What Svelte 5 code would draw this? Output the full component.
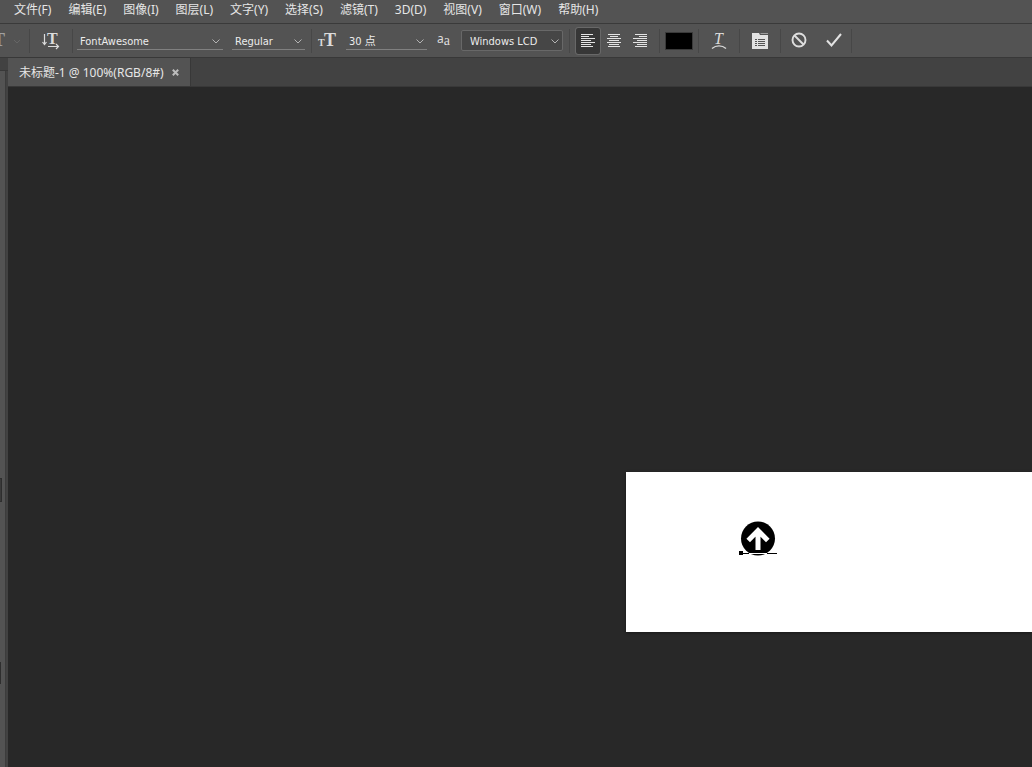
<script lang="ts">
	const menus = [
		'文件(F)',
		'编辑(E)',
		'图像(I)',
		'图层(L)',
		'文字(Y)',
		'选择(S)',
		'滤镜(T)',
		'3D(D)',
		'视图(V)',
		'窗口(W)',
		'帮助(H)'
	];

	const aligns = [
		{ id: 'left', label: '左对齐文本' },
		{ id: 'center', label: '居中对齐文本' },
		{ id: 'right', label: '右对齐文本' }
	];

	// line lengths of the paragraph glyph, top to bottom
	const lines = [12, 8, 14, 10, 14, 10, 12];

	let align = $state('left');
	let family = $state('FontAwesome');
	let weight = $state('Regular');
	let size = $state('30 点');
	let smoothing = $state('Windows LCD');

	function lineStart(id: string, length: number): number {
		if (id === 'left') return 0;
		return id === 'right' ? 14 - length : (14 - length) / 2;
	}
</script>

{#snippet chevron()}
	<svg class="chevron" width="8" height="5" viewBox="0 0 8 5" aria-hidden="true">
		<path d="M.5 .5 4 4 7.500 .5" fill="none" stroke="#b4b4b4" />
	</svg>
{/snippet}

<div class="app">
	<nav class="menu">
		{#each menus as item}
			<button type="button">{item}</button>
		{/each}
	</nav>

	<div class="options">
		<button type="button" class="tool" aria-label="文字工具">
			<svg width="24" height="18" viewBox="0 0 24 18">
				<text class="serif dim" x="-7" y="14" font-size="18">T</text>
				<path d="M14 8l3 3 3-3" fill="none" stroke="#656565" />
			</svg>
		</button>
		<span class="sep"></span>
		<button type="button" class="orient" aria-label="切换文本取向">
			<svg width="18" height="18" viewBox="0 0 18 18">
				<text class="serif" x="5" y="12" font-size="16">T</text>
				<path d="M2.500 2v10M.5 10l2 2.500 2-2.500M6 14.500h10M14 12l2.500 2.500L14 17" fill="none" stroke="#dcdcdc" stroke-width="1.200" />
			</svg>
		</button>
		<span class="sep"></span>
		<div class="fonts">
			<label class="field family">
				<select bind:value={family} aria-label="字体">
					<option>FontAwesome</option>
				</select>
				{@render chevron()}
			</label>
			<label class="field weight">
				<select bind:value={weight} aria-label="字体样式">
					<option>Regular</option>
				</select>
				{@render chevron()}
			</label>
		</div>
		<span class="sep"></span>
		<div class="sizes">
			<svg width="18" height="16" viewBox="0 0 18 16" aria-hidden="true">
				<text class="serif" x="0" y="13" font-size="10">T</text>
				<text class="serif" x="6" y="13" font-size="18">T</text>
			</svg>
			<label class="field size">
				<select bind:value={size} aria-label="字体大小">
					<option>30 点</option>
				</select>
				{@render chevron()}
			</label>
			<span class="smooth" aria-hidden="true"><sup>a</sup><sub>a</sub></span>
			<label class="field boxed">
				<select bind:value={smoothing} aria-label="消除锯齿">
					<option>Windows LCD</option>
				</select>
				{@render chevron()}
			</label>
		</div>
		<span class="sep"></span>
		<div class="aligns">
			{#each aligns as item}
				<button
					type="button"
					class:active={align === item.id}
					aria-label={item.label}
					aria-pressed={align === item.id}
					onclick={() => (align = item.id)}
				>
					<svg width="14" height="14" viewBox="0 0 14 14" shape-rendering="crispEdges">
						{#each lines as length, i}
							<rect x={lineStart(item.id, length)} y={i * 2} width={length} height="1" fill="#e4e4e4" />
						{/each}
					</svg>
				</button>
			{/each}
		</div>
		<span class="sep"></span>
		<button type="button" class="swatch" aria-label="文本颜色"></button>
		<span class="sep"></span>
		<button type="button" class="command" aria-label="创建文字变形">
			<svg width="16" height="18" viewBox="0 0 16 18">
				<text class="serif slanted" x="3" y="12" font-size="16">T</text>
				<path d="M1 16.500c4-3.500 10-3.500 14 0" fill="none" stroke="#d8d8d8" stroke-width="1.400" />
			</svg>
		</button>
		<span class="sep"></span>
		<button type="button" class="command" aria-label="切换字符和段落面板">
			<svg width="16" height="16" viewBox="0 0 16 16">
				<path d="M0 0h7l1 2h8v14H0z" fill="#e2e2e2" />
				<path d="M8 0h8v1H9z" fill="#9c9c9c" />
				<path d="M3 6.500h2M6 6.500h7M3 8.500h2M6 8.500h7M3 10.500h2M6 10.500h7M3 12.500h2M6 12.500h7" stroke="#555" />
			</svg>
		</button>
		<span class="sep"></span>
		<button type="button" class="finish" aria-label="取消所有当前编辑">
			<svg width="16" height="18" viewBox="0 0 16 18">
				<circle cx="8" cy="8" r="6.500" fill="none" stroke="#dedede" stroke-width="1.900" />
				<path d="M3.500 3.500l9 9" stroke="#dedede" stroke-width="1.900" />
			</svg>
		</button>
		<button type="button" class="finish" aria-label="提交所有当前编辑">
			<svg width="16" height="16" viewBox="0 0 16 16">
				<path d="M1 7.500l4.500 5L15 1" fill="none" stroke="#e2e2e2" stroke-width="2" />
			</svg>
		</button>
		<span class="sep"></span>
	</div>

	<div class="workspace">
		<aside class="toolbox">
			<div class="grip"></div>
			<div class="strip">
				<span class="slot"></span>
				<span class="slot second"></span>
			</div>
		</aside>
		<main class="editor">
			<div class="tabs">
				<div class="tab">
					<span>未标题-1 @ 100%(RGB/8#)</span>
					<button type="button" aria-label="关闭">
						<svg width="7" height="7" viewBox="0 0 7 7">
							<path d="M.8 .8l5.400 5.400M6.200 .8.8 6.200" stroke="#bcbcbc" stroke-width="2" />
						</svg>
					</button>
				</div>
			</div>
			<div class="canvas">
				<div class="artboard">
					<svg class="layer" width="38" height="36" viewBox="0 0 38 36" role="img" aria-label="向上箭头">
						<circle cx="19" cy="17.500" r="17" fill="#000" />
						<path d="M19 9.300V29M9.200 19.500 19 9.500l9.800 10" fill="none" stroke="#fff" stroke-width="5" stroke-linejoin="miter" />
						<path d="M10 32.500h18" stroke="#fff" />
						<path d="M3 32.500h7M28 32.500h10" stroke="#000" />
						<path d="M0 30h4v4H0z" fill="#000" />
					</svg>
				</div>
			</div>
		</main>
	</div>
</div>

<style>
	:global(body) {
		margin: 0;
		background: #282828;
	}

	.app {
		display: flex;
		flex-direction: column;
		height: 100vh;
		overflow: hidden;
		background: #535353;
		color: #e6e6e6;
		font-family: 'Noto Sans', 'Noto Sans CJK SC', sans-serif;
		font-size: 12px;
	}

	button {
		display: flex;
		align-items: center;
		justify-content: center;
		flex: none;
		border: 0;
		padding: 0;
		background: none;
		color: inherit;
		font: inherit;
	}

	svg {
		overflow: visible;
	}

	.menu {
		display: flex;
		gap: 17px;
		flex: none;
		box-sizing: border-box;
		height: 24px;
		padding: 0 14px 4px;
		border-bottom: 1px solid #3a3a3a;
	}

	.menu button {
		line-height: 18px;
		white-space: nowrap;
	}

	.options {
		display: flex;
		align-items: center;
		flex: none;
		box-sizing: border-box;
		height: 34px;
		border-bottom: 1px solid #383838;
	}

	.sep {
		flex: none;
		width: 1px;
		height: 24px;
		background: #474747;
	}

	.serif {
		fill: #dcdcdc;
		font-family: 'Liberation Serif', serif;
		font-weight: bold;
	}

	.dim {
		fill: #a0a0a0;
	}

	.slanted {
		font-style: italic;
		font-weight: normal;
	}

	.tool {
		width: 29px;
		justify-content: flex-start;
	}

	.orient {
		width: 42px;
	}

	.fonts {
		display: flex;
		gap: 9px;
		padding: 0 6px 0 4px;
	}

	.sizes {
		display: flex;
		align-items: center;
		gap: 10px;
		padding: 0 6px;
	}

	.smooth {
		display: flex;
		width: 14px;
		color: #dcdcdc;
		line-height: 14px;
	}

	.smooth sup,
	.smooth sub {
		font-size: 12px;
		vertical-align: baseline;
	}

	.smooth sup {
		padding-bottom: 4px;
	}

	.smooth sub {
		padding-top: 2px;
		font-family: 'Liberation Serif', serif;
		font-size: 14px;
	}

	.field {
		display: grid;
		align-items: center;
		box-sizing: border-box;
		height: 18px;
		padding-top: 2px;
		border-bottom: 1px solid #808080;
	}

	.field select {
		grid-area: 1 / 1;
		appearance: none;
		width: 100%;
		height: 15px;
		border: 0;
		padding: 0 3px;
		background: none;
		color: #ececec;
		font-family: 'DejaVu Sans Condensed', 'Noto Sans CJK SC', sans-serif;
		font-size: 11px;
		line-height: 15px;
	}

	.chevron {
		grid-area: 1 / 1;
		justify-self: end;
		margin-right: 3px;
		pointer-events: none;
	}

	.family {
		width: 146px;
	}

	.weight {
		width: 73px;
	}

	.size {
		width: 81px;
	}

	.boxed {
		width: 102px;
		height: 21px;
		border: 1px solid #686868;
		border-radius: 2px;
		background: #464646;
	}

	.boxed select {
		padding: 0 8px;
	}

	.aligns {
		display: flex;
		gap: 2px;
		padding: 0 7px 0 6px;
	}

	.aligns button {
		width: 24px;
		height: 26px;
		border-radius: 2px;
	}

	.aligns .active {
		background: #373737;
		outline: 1px solid #686868;
	}

	.swatch {
		width: 28px;
		height: 18px;
		margin: 0 5px;
		border: 1px solid #3a3a3a;
		background: #000;
	}

	.command {
		width: 40px;
	}

	.finish {
		width: 35px;
	}

	.workspace {
		display: flex;
		flex: 1;
		min-height: 0;
	}

	.toolbox {
		display: flex;
		flex-direction: column;
		flex: none;
		width: 8px;
		background: #424242;
	}

	.grip {
		height: 12px;
		border-bottom: 1px solid #383838;
	}

	.strip {
		flex: 1;
		box-sizing: border-box;
		width: 6px;
		padding-top: 407px;
		border-right: 1px solid #3c3c3c;
		background: #535353;
	}

	.slot {
		display: block;
		width: 1px;
		height: 22px;
		border: 1px solid #2e2e2e;
		border-left: 0;
		background: #3a3a3a;
	}

	.second {
		width: 0;
		height: 20px;
		margin-top: 160px;
	}

	.editor {
		display: flex;
		flex-direction: column;
		flex: 1;
		min-width: 0;
	}

	.tabs {
		display: flex;
		flex: none;
		box-sizing: border-box;
		height: 29px;
		border-bottom: 1px solid #383838;
		background: #424242;
	}

	.tab {
		display: flex;
		align-items: center;
		gap: 8px;
		padding: 0 11px;
		border-right: 1px solid #383838;
		background: #535353;
		white-space: nowrap;
	}

	.canvas {
		position: relative;
		flex: 1;
		overflow: hidden;
		background: #282828;
	}

	.artboard {
		position: absolute;
		top: 385px;
		right: 0;
		left: 618px;
		height: 160px;
		background: #fff;
		box-shadow: 0 1px 3px rgba(0, 0, 0, 0.4);
	}

	.layer {
		position: absolute;
		top: 49px;
		left: 113px;
	}
</style>
